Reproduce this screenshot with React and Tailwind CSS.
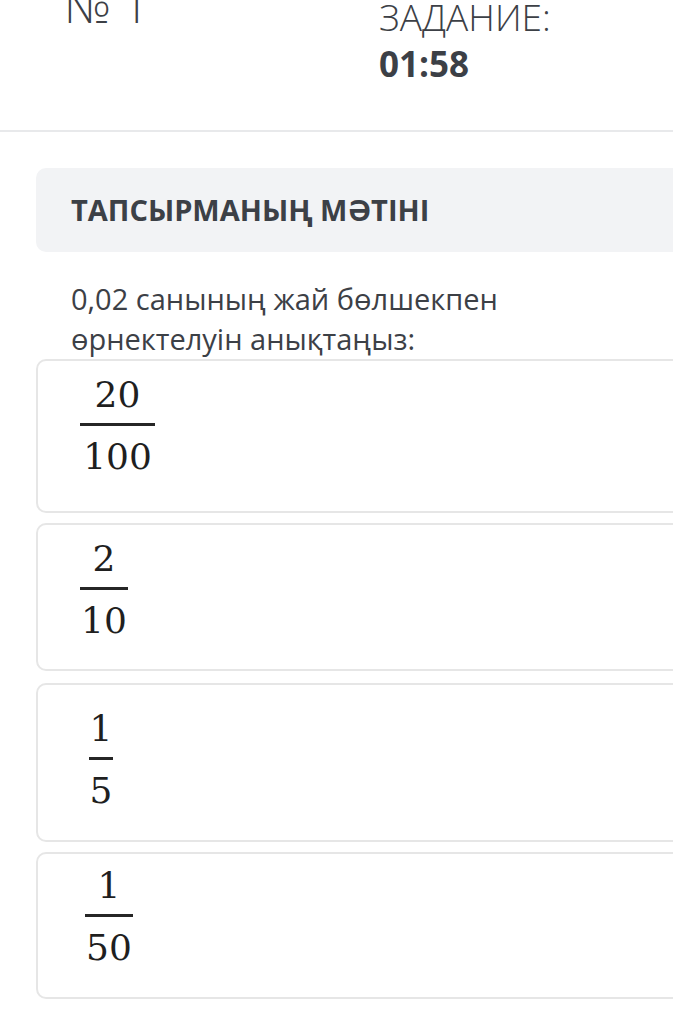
import React from 'react';

const options = [
  { num: '20', den: '100', box: 'h-[154px] pt-[14px] pl-[42px]', bar: 'w-[75px]' },
  { num: '2', den: '10', box: 'mt-[10px] h-[148px] pt-[14px] pl-[42px]', bar: 'w-[48px]' },
  { num: '1', den: '5', box: 'mt-[12px] h-[159px] pt-[24px] pl-[51px]', bar: 'w-[24px]' },
  { num: '1', den: '50', box: 'mt-[10px] h-[147px] pt-[12px] pl-[47px]', bar: 'w-[48px]' },
];

function Fraction({ num, den, bar }) {
  return (
    <div className="inline-flex flex-col items-center font-['DejaVu_Serif','Liberation_Serif',serif] text-[36px] leading-[40px] text-[#1f1f1f]">
      <span>{num}</span>
      <span className={`${bar} h-[3px] bg-[#262626] mt-[8px] mb-[11px]`} />
      <span>{den}</span>
    </div>
  );
}

export default function App() {
  return (
    <div className="w-[673px] h-[1034px] overflow-hidden bg-white font-['Open_Sans','Liberation_Sans',sans-serif] text-[#3c4046]">
      {/* Top bar */}
      <div className="flex h-[130px]">
        <div className="w-[379px] pl-[64px]">
          <div className="-mt-[18px] text-[46px] font-light leading-[46px]">№ 1</div>
        </div>
        <div className="-mt-[7px]">
          <div className="text-[37px] font-light leading-[48px]">ЗАДАНИЕ:</div>
          <div className="text-[35px] font-bold leading-[46px]">01:58</div>
        </div>
      </div>
      <div className="h-[2px] bg-[#e8e9eb]" />

      <div className="w-[760px] pl-[36px] pt-[36px]">
        <div className="h-[84px] rounded-[10px] bg-[#f2f3f5] flex items-center pl-[35px]">
          <span className="text-[29px] font-bold">ТАПСЫРМАНЫҢ МӘТІНІ</span>
        </div>

        <p className="mt-[27px] pl-[35px] text-[29px] leading-[40px]">
          0,02 санының жай бөлшекпен
          <br />
          өрнектелуін анықтаңыз:
        </p>

        <div className="flex flex-col">
          {options.map((o, i) => (
            <div key={i} className={`${o.box} rounded-[10px] border-2 border-[#e6e6e6]`}>
              <Fraction num={o.num} den={o.den} bar={o.bar} />
            </div>
          ))}
        </div>
      </div>
    </div>
  );
}
